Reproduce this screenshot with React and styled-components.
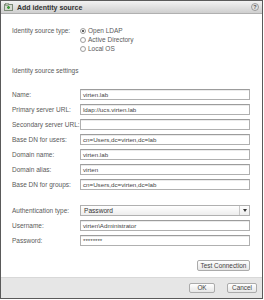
import React from 'react';
import styled, { createGlobalStyle } from 'styled-components';

const GlobalStyle = createGlobalStyle`
  body {
    margin: 0;
    background: #ffffff;
    font-family: 'Liberation Sans', Arial, sans-serif;
  }
`;

const Dialog = styled.div`
  width: 263px;
  height: 299px;
  box-sizing: border-box;
  border: 1px solid #5a5a5a;
  background: #ffffff;
  display: flex;
  flex-direction: column;
`;

const TitleBar = styled.div`
  height: 12px;
  display: flex;
  align-items: center;
  gap: 4px;
  padding: 0 3px 0 3px;
  background: linear-gradient(#f2f2f2, #cfcfcf);
  border-bottom: 1px solid #b0b0b0;
  .title {
    font-size: 7px;
    font-weight: bold;
    color: #333333;
  }
  .help {
    margin-left: auto;
  }
`;

const Body = styled.div`
  flex: 1;
  padding: 12px 12px 0 11px;
  display: flex;
  flex-direction: column;
`;

const Label = styled.div`
  width: 68px;
  flex-shrink: 0;
  font-size: 6.5px;
  color: #5a5a5a;
  white-space: nowrap;
  line-height: 11px;
`;

const TypeRow = styled.div`
  display: flex;
  align-items: flex-start;
  ${Label} {
    line-height: 9px;
  }
`;

const RadioList = styled.div`
  display: flex;
  flex-direction: column;
`;

const RadioItem = styled.div`
  height: 9px;
  display: flex;
  align-items: center;
  gap: 2px;
  font-size: 6.5px;
  color: #5a5a5a;
`;

const RadioDot = styled.span`
  width: 6px;
  height: 6px;
  box-sizing: border-box;
  border-radius: 50%;
  border: 1px solid #a0a0a0;
  background: radial-gradient(circle, #ffffff 40%, #e8e8e8 100%);
  display: flex;
  align-items: center;
  justify-content: center;
  &::after {
    content: '';
    width: 2px;
    height: 2px;
    border-radius: 50%;
    background: ${(p) => (p.checked ? '#2a2a2a' : 'transparent')};
  }
`;

const SectionTitle = styled.div`
  margin-top: 13px;
  height: 9px;
  line-height: 9px;
  font-size: 6.5px;
  color: #5a5a5a;
`;

const FieldGroup = styled.div`
  margin-top: ${(p) => p.top}px;
  display: flex;
  flex-direction: column;
  gap: 4px;
`;

const FieldRow = styled.div`
  display: flex;
  align-items: center;
  height: 11px;
`;

const Input = styled.div`
  flex: 1;
  height: 11px;
  box-sizing: border-box;
  border: 1px solid #b0b0b0;
  border-top-color: #9c9c9c;
  box-shadow: inset 0 1px 0 #ebebeb;
  background: #ffffff;
  padding: 0 2px;
  font-size: 6.2px;
  line-height: 9px;
  color: #444444;
  white-space: nowrap;
  overflow: hidden;
`;

const Select = styled.div`
  flex: 1;
  height: 11px;
  box-sizing: border-box;
  border: 1px solid #b0b0b0;
  background: linear-gradient(#ffffff, #ededed);
  display: flex;
  align-items: center;
  font-size: 6.6px;
  color: #333333;
  .value {
    flex: 1;
    padding-left: 3px;
  }
  .arrow {
    width: 9px;
    height: 9px;
    border-left: 1px solid #c8c8c8;
    display: flex;
    align-items: center;
    justify-content: center;
  }
`;

const Button = styled.div`
  height: ${(p) => p.h || 11}px;
  width: ${(p) => p.w}px;
  box-sizing: border-box;
  border: 1px solid #ababab;
  border-radius: 2px;
  background: linear-gradient(#ffffff, #e6e6e6);
  display: flex;
  align-items: center;
  justify-content: center;
  font-size: 6.4px;
  color: #444444;
`;

const TestRow = styled.div`
  margin-top: 14px;
  display: flex;
  justify-content: flex-end;
`;

const Footer = styled.div`
  height: 21px;
  box-sizing: border-box;
  background: #e6e6e6;
  border-top: 1px solid #d8d8d8;
  display: flex;
  align-items: center;
  justify-content: flex-end;
  gap: 12px;
  padding: 0 5px 1px 0;
`;

const TitleIcon = () => (
  <svg width="9" height="8" viewBox="0 0 9 8">
    <rect x="0.5" y="1.5" width="8" height="6" fill="#d8dcd4" stroke="#7d8a78" />
    <rect x="1.5" y="0.5" width="3" height="2" fill="#b8c2b0" stroke="#7d8a78" strokeWidth="0.6" />
    <path d="M3 4.5h3M4.5 3v3" stroke="#3f9a3a" strokeWidth="1.4" />
  </svg>
);

const HelpIcon = () => (
  <svg className="help" width="8" height="8" viewBox="0 0 8 8">
    <circle cx="4" cy="4" r="3.5" fill="#e2e2e2" stroke="#8a8a8a" strokeWidth="0.8" />
    <text x="4" y="6.2" fontSize="5.5" textAnchor="middle" fill="#555" fontFamily="Liberation Sans, sans-serif" fontWeight="bold">?</text>
  </svg>
);

const settings = [
  ['Name:', 'virten.lab'],
  ['Primary server URL:', 'ldap://ucs.virten.lab'],
  ['Secondary server URL:', ''],
  ['Base DN for users:', 'cn=Users,dc=virten,dc=lab'],
  ['Domain name:', 'virten.lab'],
  ['Domain alias:', 'virten'],
  ['Base DN for groups:', 'cn=Users,dc=virten,dc=lab'],
];

const App = () => (
  <>
    <GlobalStyle />
    <Dialog>
      <TitleBar>
        <TitleIcon />
        <span className="title">Add identity source</span>
        <HelpIcon />
      </TitleBar>
      <Body>
        <TypeRow>
          <Label>Identity source type:</Label>
          <RadioList>
            <RadioItem><RadioDot checked />Open LDAP</RadioItem>
            <RadioItem><RadioDot />Active Directory</RadioItem>
            <RadioItem><RadioDot />Local OS</RadioItem>
          </RadioList>
        </TypeRow>
        <SectionTitle>Identity source settings</SectionTitle>
        <FieldGroup top={14}>
          {settings.map(([label, value]) => (
            <FieldRow key={label}>
              <Label>{label}</Label>
              <Input>{value}</Input>
            </FieldRow>
          ))}
        </FieldGroup>
        <FieldGroup top={15}>
          <FieldRow>
            <Label>Authentication type:</Label>
            <Select>
              <span className="value">Password</span>
              <span className="arrow">
                <svg width="4" height="3" viewBox="0 0 4 3">
                  <path d="M0 0h4L2 3z" fill="#333" />
                </svg>
              </span>
            </Select>
          </FieldRow>
          <FieldRow>
            <Label>Username:</Label>
            <Input>virten\Administrator</Input>
          </FieldRow>
          <FieldRow>
            <Label>Password:</Label>
            <Input>********</Input>
          </FieldRow>
        </FieldGroup>
        <TestRow>
          <Button w={53}>Test Connection</Button>
        </TestRow>
      </Body>
      <Footer>
        <Button w={26} h={10}>OK</Button>
        <Button w={30} h={10}>Cancel</Button>
      </Footer>
    </Dialog>
  </>
);

export default App;
